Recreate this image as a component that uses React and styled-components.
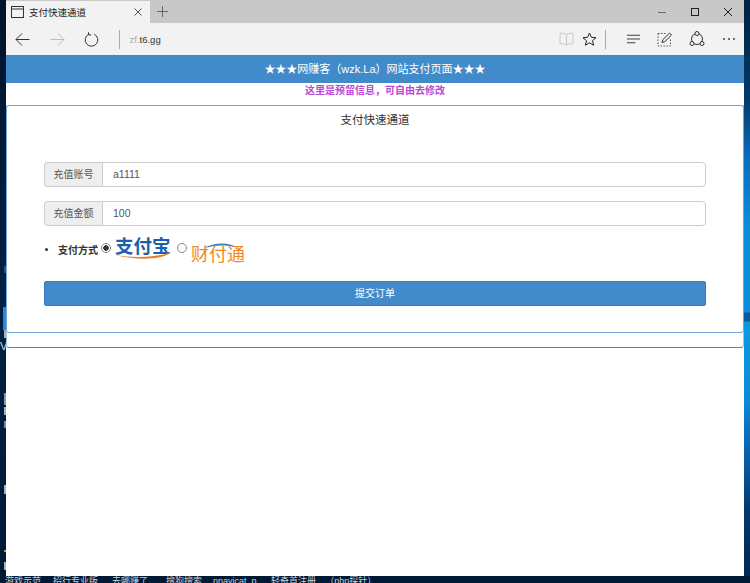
import React from "react";
import styled, { createGlobalStyle } from "styled-components";

const GlobalStyle = createGlobalStyle`
  html, body {
    margin: 0;
    padding: 0;
    height: 100%;
    overflow: hidden;
    background: #00172f;
  }
  * { box-sizing: border-box; }
`;

const CJK = `"Liberation Sans", "Noto Sans CJK SC", sans-serif`;

const App = () => {
  return (
    <Desktop>
      <GlobalStyle />
      <Main>
        <LeftStrip>
          <StripBit $top={266} $h={7} $color="#33506e" />
          <BlueBit />
          <StripBit $top={330} $h={8} $color="#aab2ba" />
          <StripLetter>V</StripLetter>
          <StripBit $top={393} $h={12} $color="#8a96a2" />
          <StripBit $top={407} $h={8} $color="#aab2ba" />
          <StripBit $top={421} $h={7} $color="#7d8a97" />
          <StripBit $top={485} $h={9} $color="#aab2ba" />
          <StripBit $top={550} $h={2} $color="#d08a30" />
          <StripBit $top={562} $h={8} $color="#aab2ba" />
        </LeftStrip>
        <Browser>
          <TabStrip>
            <Tab>
              <TabIcon viewBox="0 0 13 12">
                <rect x="0.5" y="0.5" width="12" height="11" fill="none" stroke="#333" />
                <line x1="0.5" y1="3" x2="12.5" y2="3" stroke="#333" />
              </TabIcon>
              <TabTitle>支付快速通道</TabTitle>
              <svg width="8" height="8" viewBox="0 0 8 8">
                <path d="M.5.5l7 7M7.5.5l-7 7" stroke="#555" fill="none" />
              </svg>
            </Tab>
            <NewTab>
              <svg width="11" height="11" viewBox="0 0 11 11">
                <path d="M5.5 0v11M0 5.5h11" stroke="#666" fill="none" />
              </svg>
            </NewTab>
            <WindowButtons>
              <WindowButton>
                <svg width="10" height="10" viewBox="0 0 10 10">
                  <path d="M1 5.500h8" stroke="#666" fill="none" />
                </svg>
              </WindowButton>
              <WindowButton>
                <svg width="10" height="10" viewBox="0 0 10 10">
                  <rect x="1.500" y="1.500" width="7" height="7" fill="none" stroke="#222" />
                </svg>
              </WindowButton>
              <WindowButton>
                <svg width="10" height="10" viewBox="0 0 10 10">
                  <path d="M1 1l8 8M9 1L1 9" stroke="#222" fill="none" />
                </svg>
              </WindowButton>
            </WindowButtons>
          </TabStrip>
          <Toolbar>
            <NavIcon viewBox="0 0 15 14">
              <path d="M14.500 7H1M7 1L1 7l6 6" fill="none" stroke="#333" />
            </NavIcon>
            <NavIcon viewBox="0 0 15 14">
              <path d="M.5 7H14M8 1l6 6-6 6" fill="none" stroke="#bbb" />
            </NavIcon>
            <NavIcon viewBox="0 0 15 15">
              <path d="M4.800 2.200A6.300 6.300 0 1 0 10.200 2.200M4.500.3v2.600h2.700" fill="none" stroke="#333" />
            </NavIcon>
            <Divider />
            <Address>
              <span>zf.</span>t6.gg
            </Address>
            <ToolIcons>
              <svg width="15" height="14" viewBox="0 0 15 14">
                <path d="M7.500 2.500C6 1.200 3 1 1 1.500v10.500c2-.5 5-.3 6.500 1 1.500-1.300 4.500-1.500 6.500-1V1.500C12 1 9 1.200 7.500 2.500zM7.500 2.500V13" fill="none" stroke="#c8c8c8" />
              </svg>
              <StarIcon viewBox="0 0 15 14">
                <path d="M7.500 1l1.900 4.300 4.600.4-3.500 3 1.100 4.500-4.100-2.400-4.100 2.400 1.100-4.500-3.500-3 4.600-.4z" fill="none" stroke="#222" />
              </StarIcon>
              <Divider />
              <HubIcon viewBox="0 0 16 12">
                <path d="M1 2h14M1 6h14M1 10h9" fill="none" stroke="#333" />
              </HubIcon>
              <NoteIcon viewBox="0 0 15 15">
                <path d="M1 1.500h9M1 1.500v12.500h12.500V6" fill="none" stroke="#555" strokeDasharray="1.500 1.500" />
                <path d="M5 10.500l.8-2.800L12.500 1l2 2-6.700 6.700z" fill="none" stroke="#333" />
              </NoteIcon>
              <ShareIcon viewBox="0 0 16 16">
                <circle cx="8" cy="8" r="5.500" fill="none" stroke="#333" />
                <circle cx="8" cy="2.500" r="2" fill="#f2f2f2" stroke="#333" />
                <circle cx="3" cy="12.500" r="2" fill="#f2f2f2" stroke="#333" />
                <circle cx="13" cy="12.500" r="2" fill="#f2f2f2" stroke="#333" />
              </ShareIcon>
              <MoreIcon viewBox="0 0 14 4">
                <circle cx="2" cy="2" r="0.900" fill="#333" />
                <circle cx="7" cy="2" r="0.900" fill="#333" />
                <circle cx="12" cy="2" r="0.900" fill="#333" />
              </MoreIcon>
            </ToolIcons>
          </Toolbar>
          <Page>
            <Banner>★★★网赚客（wzk.La）网站支付页面★★★</Banner>
            <Notice>这里是预留信息，可自由去修改</Notice>
            <OuterPanel>
              <Panel>
                <PanelTitle>支付快速通道</PanelTitle>
                <Form>
                  <InputGroup>
                    <Addon>充值账号</Addon>
                    <Field>a1111</Field>
                  </InputGroup>
                  <InputGroup>
                    <Addon>充值金额</Addon>
                    <Field>100</Field>
                  </InputGroup>
                  <PayRow>
                    <Bullet />
                    <PayLabel>支付方式</PayLabel>
                    <Radio $checked={true} />
                    <AlipayLogo>
                      <AlipayText>支付宝</AlipayText>
                      <Swoosh viewBox="0 0 58 8" preserveAspectRatio="none">
                        <path d="M0 3C18 6 40 6 58 0C50 6 30 10 0 3z" fill="#f07a1c" />
                      </Swoosh>
                    </AlipayLogo>
                    <Radio />
                    <TenpayLogo>
                      <TenpayArc viewBox="0 0 44 10" preserveAspectRatio="none">
                        <path d="M4 8C16 0 30 -1 42 9C32 3 18 3 4 8z" fill="#3f83c4" />
                      </TenpayArc>
                      <TenpayText>财付通</TenpayText>
                    </TenpayLogo>
                  </PayRow>
                  <Submit>提交订单</Submit>
                </Form>
              </Panel>
            </OuterPanel>
          </Page>
        </Browser>
        <RightStrip />
      </Main>
      <Taskbar>
        <TaskLabel $gap={5}>游戏示范</TaskLabel>
        <TaskLabel $gap={12}>招行专业版</TaskLabel>
        <TaskLabel $gap={14}>去哪赚了</TaskLabel>
        <TaskLabel $gap={18}>搜狗搜索</TaskLabel>
        <TaskLabel $gap={11}>nnavicat_p...</TaskLabel>
        <TaskLabel $gap={7}>轻奇首注册</TaskLabel>
        <TaskLabel $gap={9}>（php探针）</TaskLabel>
      </Taskbar>
    </Desktop>
  );
};

const Desktop = styled.div`
  width: 750px;
  height: 583px;
  display: flex;
  flex-direction: column;
  overflow: hidden;
  background: #001a36;
  font-family: ${CJK};
`;

const Main = styled.div`
  flex: none;
  height: 576px;
  display: flex;
`;

const LeftStrip = styled.div`
  flex: none;
  width: 6px;
  position: relative;
  overflow: hidden;
  background: linear-gradient(to bottom, #00142b 0, #012245 300px, #001a36 576px);
`;

const StripBit = styled.div`
  position: absolute;
  left: 4px;
  width: 2px;
  top: ${(p) => p.$top}px;
  height: ${(p) => p.$h}px;
  background: ${(p) => p.$color};
`;

const StripLetter = styled.div`
  position: absolute;
  left: 0;
  top: 340px;
  font-size: 11px;
  line-height: 13px;
  color: #d8dde2;
`;

const BlueBit = styled.div`
  position: absolute;
  left: 3px;
  top: 307px;
  width: 3px;
  height: 23px;
  background: #2f86d6;
`;

const RightStrip = styled.div`
  flex: none;
  width: 6px;
  background: linear-gradient(
    to bottom,
    #01213f 0,
    #033a6a 100px,
    #0a6fc0 160px,
    #0a8fdc 230px,
    #0a8fdc 312px,
    #0a5a9c 313px,
    #0a5a9c 321px,
    #0a9ae0 322px,
    #0a8ad8 400px,
    #0a6bb8 440px,
    #04386f 510px,
    #02284f 576px
  );
`;

const Browser = styled.div`
  flex: none;
  width: 738px;
  height: 576px;
  background: #fff;
  display: flex;
  flex-direction: column;
`;

const TabStrip = styled.div`
  flex: none;
  height: 23px;
  background: #c8c8c8;
  display: flex;
  align-items: stretch;
`;

const Tab = styled.div`
  width: 144px;
  background: #f2f2f2;
  display: flex;
  align-items: center;
  padding: 0 8px 0 5px;
  margin-top: 1px;
`;

const TabIcon = styled.svg`
  width: 13px;
  height: 12px;
  flex: none;
`;

const TabTitle = styled.span`
  flex: 1;
  margin-left: 5px;
  font-size: 9.5px;
  color: #222;
  white-space: nowrap;
`;

const NewTab = styled.div`
  width: 24px;
  display: flex;
  align-items: center;
  justify-content: center;
`;

const WindowButtons = styled.div`
  margin-left: auto;
  display: flex;
`;

const WindowButton = styled.div`
  width: 33px;
  display: flex;
  align-items: center;
  justify-content: center;
`;

const Toolbar = styled.div`
  flex: none;
  height: 32px;
  background: #f2f2f2;
  display: flex;
  align-items: center;
  padding: 0 8px 0 9px;
`;

const NavIcon = styled.svg`
  flex: none;
  width: 15px;
  height: 15px;
  margin-right: 19.5px;
`;

const Divider = styled.div`
  flex: none;
  width: 1px;
  height: 19px;
  background: #aaa;
`;

const Address = styled.div`
  margin-left: 10px;
  font-size: 9.5px;
  color: #333;
  span {
    color: #aaa;
  }
`;

const ToolIcons = styled.div`
  margin-left: auto;
  display: flex;
  align-items: center;
`;

const StarIcon = styled.svg`
  width: 15px;
  height: 14px;
  margin: 0 8px 0 8px;
`;

const HubIcon = styled.svg`
  width: 15px;
  height: 12px;
  margin-left: 20px;
`;

const NoteIcon = styled.svg`
  width: 15px;
  height: 15px;
  margin-left: 16px;
`;

const ShareIcon = styled.svg`
  width: 16px;
  height: 16px;
  margin-left: 17px;
`;

const MoreIcon = styled.svg`
  width: 14px;
  height: 4px;
  margin-left: 17px;
`;

const Page = styled.div`
  flex: 1;
  background: #fff;
  display: flex;
  flex-direction: column;
`;

const Banner = styled.div`
  flex: none;
  height: 28px;
  background: #428bca;
  color: #fff;
  font-size: 11px;
  line-height: 28px;
  text-align: center;
`;

const Notice = styled.div`
  flex: none;
  height: 14px;
  line-height: 16px;
  color: #bb48d8;
  font-size: 10px;
  font-weight: 700;
  text-align: center;
`;

const OuterPanel = styled.div`
  margin-top: 8px;
  height: 243px;
  border: 1px solid #9cc2e6;
  border-top: none;
  border-bottom-color: #428bca;
  border-radius: 0 0 3px 3px;
`;

const Panel = styled.div`
  height: 228px;
  margin: 0 -1px;
  border: 1px solid #6ea6da;
  border-radius: 3px;
  display: flex;
  flex-direction: column;
`;

const PanelTitle = styled.div`
  flex: none;
  text-align: center;
  font-size: 11.5px;
  line-height: 15px;
  margin-top: 7px;
  color: #333;
`;

const Form = styled.div`
  margin-top: 34px;
  padding: 0 37px;
  display: flex;
  flex-direction: column;
`;

const InputGroup = styled.div`
  display: flex;
  height: 25px;
  margin-bottom: 14px;
`;

const Addon = styled.div`
  flex: none;
  width: 58px;
  background: #eee;
  border: 1px solid #ccc;
  border-right: none;
  border-radius: 4px 0 0 4px;
  color: #555;
  font-size: 10px;
  line-height: 23px;
  text-align: center;
`;

const Field = styled.div`
  flex: 1;
  background: #fff;
  border: 1px solid #ccc;
  border-radius: 0 4px 4px 0;
  color: #555;
  font-size: 10.5px;
  line-height: 23px;
  padding-left: 10px;
`;

const PayRow = styled.div`
  display: flex;
  align-items: center;
  height: 26px;
  margin-top: -4px;
`;

const Bullet = styled.span`
  flex: none;
  width: 3px;
  height: 3px;
  border-radius: 50%;
  background: #333;
  margin-left: 1px;
`;

const PayLabel = styled.span`
  margin-left: 10px;
  font-size: 10px;
  font-weight: 700;
  color: #333;
`;

const Radio = styled.span`
  flex: none;
  width: 10px;
  height: 10px;
  margin-left: 3px;
  border: 1px solid #888;
  border-radius: 50%;
  background: ${(p) => (p.$checked ? "radial-gradient(circle, #333 0 2.5px, #fff 3px)" : "#fff")};
  position: relative;
  top: -1px;
`;

const AlipayLogo = styled.div`
  flex: none;
  position: relative;
  width: 56px;
  height: 25px;
  margin: 0 3px 0 4px;
`;

const AlipayText = styled.div`
  font-size: 18.5px;
  line-height: 20px;
  font-weight: 700;
  color: #1d5fa8;
  white-space: nowrap;
`;

const Swoosh = styled.svg`
  position: absolute;
  left: 0;
  top: 15px;
  width: 57px;
  height: 8px;
`;

const TenpayLogo = styled.div`
  flex: none;
  position: relative;
  width: 56px;
  height: 25px;
  margin-left: 4px;
`;

const TenpayArc = styled.svg`
  position: absolute;
  left: 8px;
  top: 5px;
  width: 44px;
  height: 8px;
`;

const TenpayText = styled.div`
  position: absolute;
  left: 0;
  top: 9px;
  font-size: 18px;
  line-height: 19px;
  color: #f08a20;
  white-space: nowrap;
`;

const Submit = styled.div`
  height: 25px;
  margin-top: 19px;
  background: #428bca;
  border: 1px solid #357ebd;
  border-radius: 2px;
  color: #fff;
  font-size: 10px;
  line-height: 23px;
  text-align: center;
`;

const Taskbar = styled.div`
  flex: none;
  height: 7px;
  overflow: hidden;
  display: flex;
  font-size: 9px;
  line-height: 10px;
  color: #c8d0d8;
`;

const TaskLabel = styled.span`
  margin-left: ${(p) => p.$gap}px;
  white-space: nowrap;
`;

export default App;
